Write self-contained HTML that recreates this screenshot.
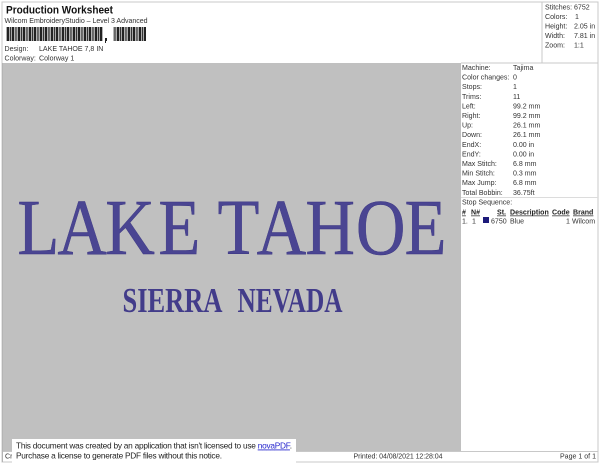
<!DOCTYPE html>
<html><head><meta charset="utf-8">
<style>
html,body{margin:0;padding:0;width:600px;height:464px;overflow:hidden;background:#fff}
svg{display:block;position:absolute;left:0;top:0;filter:blur(.3px)}
text{font-family:"Liberation Sans",sans-serif;font-size:7.05px;fill:#333}
.s{font-family:"Liberation Serif",serif;fill:#4a4592;stroke:#3a3580;stroke-width:.4px;font-size:79px}
.m{font-family:"Liberation Serif",serif;fill:#423c8a;font-size:35px;font-weight:bold}
.h{font-weight:bold;text-decoration:underline;fill:#222}
.n{font-size:8.3px;fill:#222}
</style></head><body>
<svg width="600" height="464" viewBox="0 0 600 464">
<defs><pattern id="b" x="7" width="11" height="14" patternUnits="userSpaceOnUse">
<rect width="11" height="14" fill="#fff"/><rect x="0" width="2" height="14" fill="#222"/><rect x="2.6" width="1.5" height="14" fill="#333"/><rect x="4.7" width="2.4" height="14" fill="#222"/><rect x="7.7" width="1.2" height="14" fill="#555"/><rect x="9.3" width="1.1" height="14" fill="#333"/>
</pattern></defs>
<rect width="600" height="464" fill="#fff"/>
<rect x="2" y="2" width="596" height="460" fill="#fff" stroke="#c8c8c8" stroke-width="1"/>
<line x1="542" y1="2" x2="542" y2="63" stroke="#c8c8c8"/>
<rect x="3" y="63" width="458" height="388" fill="#c0c0c0"/>
<rect x="2" y="63" width="1" height="399" fill="#b4b4b4"/>
<line x1="461" y1="63" x2="598" y2="63" stroke="#c8c8c8"/>
<line x1="461" y1="197.5" x2="598" y2="197.5" stroke="#dcdcdc"/>
<line x1="3" y1="451.5" x2="598" y2="451.5" stroke="#c8c8c8"/>

<text x="6" y="13.5" style="font-size:10.6px;font-weight:bold;fill:#111" textLength="107" lengthAdjust="spacingAndGlyphs">Production Worksheet</text>
<text x="4.5" y="23" textLength="143">Wilcom EmbroideryStudio – Level 3 Advanced</text>
<rect x="6" y="27" width="97" height="14" fill="url(#b)"/>
<rect x="113" y="27" width="33" height="14" fill="url(#b)"/>
<rect x="105" y="38" width="2" height="3" fill="#222"/><rect x="105" y="41" width="1" height="2" fill="#222"/>
<text x="4.5" y="51">Design:</text><text x="39" y="51">LAKE TAHOE 7,8 IN</text>
<text x="4.5" y="60.5">Colorway:</text><text x="39" y="60.5">Colorway 1</text>

<text x="545" y="9.5">Stitches:</text><text x="574" y="9.5">6752</text>
<text x="545" y="19">Colors:</text><text x="575" y="19">1</text>
<text x="545" y="28.5">Height:</text><text x="574" y="28.5">2.05 in</text>
<text x="545" y="38">Width:</text><text x="574" y="38">7.81 in</text>
<text x="545" y="47.5">Zoom:</text><text x="574" y="47.5">1:1</text>

<text x="462" y="70">Machine:</text><text x="513" y="70">Tajima</text>
<text x="462" y="79.6">Color changes:</text><text x="513" y="79.6">0</text>
<text x="462" y="89.2">Stops:</text><text x="513" y="89.2">1</text>
<text x="462" y="98.8">Trims:</text><text x="513" y="98.8">11</text>
<text x="462" y="108.4">Left:</text><text x="513" y="108.4">99.2 mm</text>
<text x="462" y="118">Right:</text><text x="513" y="118">99.2 mm</text>
<text x="462" y="127.6">Up:</text><text x="513" y="127.6">26.1 mm</text>
<text x="462" y="137.2">Down:</text><text x="513" y="137.2">26.1 mm</text>
<text x="462" y="146.8">EndX:</text><text x="513" y="146.8">0.00 in</text>
<text x="462" y="156.4">EndY:</text><text x="513" y="156.4">0.00 in</text>
<text x="462" y="166">Max Stitch:</text><text x="513" y="166">6.8 mm</text>
<text x="462" y="175.6">Min Stitch:</text><text x="513" y="175.6">0.3 mm</text>
<text x="462" y="185.2">Max Jump:</text><text x="513" y="185.2">6.8 mm</text>
<text x="462" y="194.8">Total Bobbin:</text><text x="513" y="194.8">36.75ft</text>
<text x="462" y="204.5">Stop Sequence:</text>
<text class="h" x="462" y="214.5">#</text><text class="h" x="471" y="214.5">N#</text><text class="h" x="497" y="214.5">St.</text><text class="h" x="510" y="214.5">Description</text><text class="h" x="552" y="214.5">Code</text><text class="h" x="573" y="214.5">Brand</text>
<text x="462" y="223.5">1.</text><text x="472" y="223.5">1</text>
<rect x="483" y="217" width="6" height="6" fill="#1d1a7a"/>
<text x="491" y="223.5">6750</text><text x="510" y="223.5">Blue</text><text x="566" y="223.5">1</text><text x="572" y="223.5">Wilcom</text>

<g transform="translate(0,254) scale(.87,1)">
<text class="s" x="20">L</text>
<text class="s" x="66">A</text>
<text class="s" x="121">K</text>
<text class="s" x="182">E</text>
<text class="s" x="250">T</text>
<text class="s" x="295">A</text>
<text class="s" x="351">H</text>
<text class="s" x="409">O</text>
<text class="s" x="465">E</text>
</g>
<text class="m" x="122.5" y="312" textLength="100" lengthAdjust="spacingAndGlyphs">SIERRA</text>
<text class="m" x="237.5" y="312" textLength="105" lengthAdjust="spacingAndGlyphs">NEVADA</text>

<text x="5" y="458.5">Cr</text>
<text x="353.5" y="458.5" textLength="89">Printed: 04/08/2021 12:28:04</text>
<text x="596" y="458.5" text-anchor="end">Page 1 of 1</text>

<rect x="12" y="439" width="284" height="25" fill="#fff"/>
<text class="n" x="16" y="448.5" textLength="276">This document was created by an application that isn't licensed to use <tspan fill="#2222cc" text-decoration="underline">novaPDF</tspan>.</text>
<text class="n" x="16" y="458.5" textLength="206">Purchase a license to generate PDF files without this notice.</text>
</svg>
</body></html>
